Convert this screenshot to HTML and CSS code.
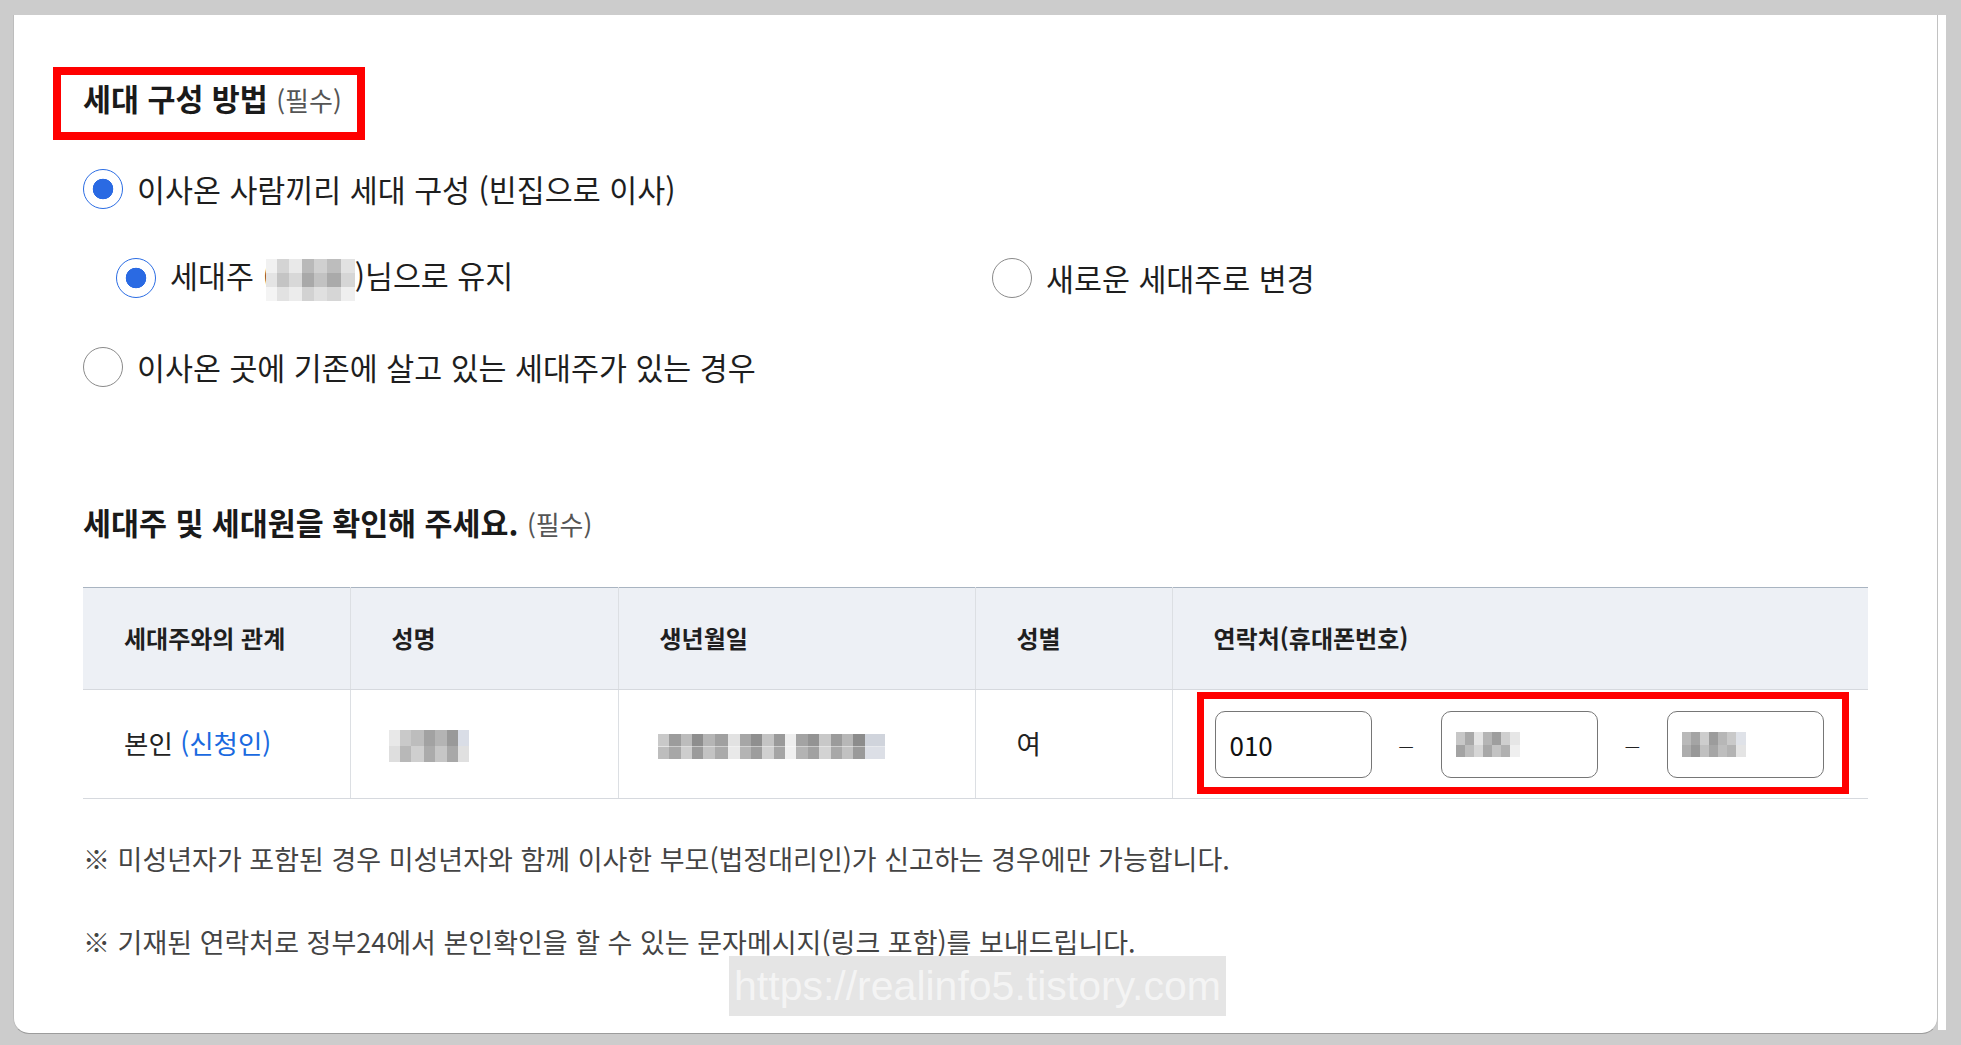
FILE: index.html
```html
<!DOCTYPE html>
<html lang="ko">
<head>
  <meta charset="UTF-8" />
  <meta name="viewport" content="width=device-width, initial-scale=1" />
  <title>세대 구성 방법</title>
  <link rel="stylesheet" href="styles.css">
</head>
<body>

  <div class="frame">
    <div class="card">
      <h2 class="title boxed">세대 구성 방법 <span class="req">(필수)</span></h2>

      <div class="options">
        <label class="opt">
          <input type="radio" name="mode" class="radio" checked>
          <span>이사온 사람끼리 세대 구성 (빈집으로 이사)</span>
        </label>
        <div class="sub">
          <label class="opt">
            <input type="radio" name="head" class="radio" checked>
            <span>세대주 (<span class="mosaic m-head"></span>)님으로 유지</span>
          </label>
          <label class="opt">
            <input type="radio" name="head" class="radio">
            <span>새로운 세대주로 변경</span>
          </label>
        </div>
        <label class="opt">
          <input type="radio" name="mode" class="radio">
          <span>이사온 곳에 기존에 살고 있는 세대주가 있는 경우</span>
        </label>
      </div>

      <h2 class="title section">세대주 및 세대원을 확인해 주세요. <span class="req">(필수)</span></h2>

      <table class="members">
        <colgroup>
          <col style="width: 267px">
          <col style="width: 268px">
          <col style="width: 357px">
          <col style="width: 197px">
          <col>
        </colgroup>
        <thead>
          <tr>
            <th>세대주와의 관계</th>
            <th>성명</th>
            <th>생년월일</th>
            <th>성별</th>
            <th>연락처(휴대폰번호)</th>
          </tr>
        </thead>
        <tbody>
          <tr>
            <td>본인 <span class="link">(신청인)</span></td>
            <td><span class="mosaic m-name"></span></td>
            <td><span class="mosaic m-birth"></span></td>
            <td>여</td>
            <td class="tel-cell">
              <div class="tel-group">
                <input type="text" class="tel" value="010">
                <span class="dash">—</span>
                <input type="text" class="tel masked">
                <span class="dash">—</span>
                <input type="text" class="tel masked alt">
              </div>
            </td>
          </tr>
        </tbody>
      </table>

      <p class="note first">※ 미성년자가 포함된 경우 미성년자와 함께 이사한 부모(법정대리인)가 신고하는 경우에만 가능합니다.</p>
      <p class="note">※ 기재된 연락처로 정부24에서 본인확인을 할 수 있는 문자메시지(링크 포함)를 보내드립니다.</p>

      <div class="watermark">https://realinfo5.tistory.com</div>
    </div>
    <div class="gutter"></div>
  </div>

</body>
</html>
```

FILE: styles.css
```css
html, body {
  height: 100%;
}
body {
  margin: 0;
  background: #cccccc;
  font-family: 'Noto Sans CJK KR', 'Noto Sans', sans-serif;
  color: #1c1c1c;
  overflow: hidden;
}
.frame {
  display: flex;
  align-items: flex-start;
  padding: 15px 15px 0 13px;
}
.card {
  position: relative;
  flex: 1;
  height: 1018px;
  background: #fff;
  border-left: 1px solid #bdbdbd;
  border-right: 1px solid #c2c2c2;
  border-bottom: 1px solid #9c9c9c;
  border-radius: 0 0 16px 16px;
  padding: 0 69px;
}
.gutter {
  width: 8px;
  height: 1015px;
  background: #fff;
}
.title {
  margin: 0;
  font-size: 30.4px;
  font-weight: 700;
  color: #1a1a1a;
}
.req {
  font-size: 26px;
  font-weight: 400;
  color: #555;
}
.boxed {
  width: fit-content;
  margin: 52px 0 0 -30px;
  border: 8px solid #ff0000;
  padding: 0 15px 9px 22px;
  line-height: 47px;
}
.options {
  display: flex;
  flex-direction: column;
  gap: 49px;
  margin-top: 29px;
}
.sub {
  display: grid;
  grid-template-columns: 1fr 1fr;
  margin-left: 33px;
}
.opt {
  display: flex;
  align-items: center;
  gap: 14px;
  height: 40px;
  font-size: 30.4px;
  line-height: 40px;
  color: #1e1e1e;
}
.radio {
  appearance: none;
  -webkit-appearance: none;
  flex: none;
  width: 40px;
  height: 40px;
  margin: 0;
  border: 1px solid #8a8a8a;
  border-radius: 50%;
  background: #fff;
}
.radio:checked {
  border-color: #2b6de4;
  background: radial-gradient(circle, #2a6ae3 0 10px, #fff 10.6px);
}
.section {
  margin-top: 115px;
  line-height: 40px;
}
.members {
  width: 100%;
  margin-top: 43px;
  border-collapse: collapse;
  table-layout: fixed;
  border-top: 1px solid #a9b4c1;
}
.members th {
  height: 98px;
  padding: 0 0 3px 41px;
  background: #edf0f5;
  text-align: left;
  font-size: 24px;
  font-weight: 700;
  color: #1f1f1f;
  border-bottom: 1px solid #d6d9de;
  border-left: 1px solid #dcdfe3;
}
.members td {
  height: 105px;
  padding: 0 0 3px 41px;
  font-size: 26.5px;
  color: #222;
  border-bottom: 1px solid #d6d9de;
  border-left: 1px solid #dcdfe3;
}
.members th:first-child,
.members td:first-child {
  border-left: none;
}
.link {
  color: #1a6ae0;
}
.members td.tel-cell {
  padding-left: 24px;
}
.tel-group {
  display: flex;
  align-items: center;
  gap: 27px;
  width: fit-content;
  border: 7px solid #ff0000;
  padding: 12px 18px 9px 11px;
}
.tel {
  box-sizing: border-box;
  width: 157px;
  height: 67px;
  padding: 0 14px;
  border: 1px solid #767676;
  border-radius: 10px;
  font-family: inherit;
  font-size: 26px;
  color: #111;
  background: #fff;
}
.dash {
  font-size: 17px;
  line-height: 1;
  color: #222;
}
.mosaic {
  display: inline-block;
  vertical-align: middle;
  filter: blur(0.7px);
}
.m-head {
  width: 89px;
  height: 42px;
  margin-left: -7px;
  background:
    linear-gradient(90deg, #f1f1f1 0 12%, #d4d4d4 12% 26%, #e9e9e9 26% 40%, #b9b9b9 40% 54%, #d0d0d0 54% 68%, #bdbdbd 68% 84%, #e2e2e2 84% 100%) top / 100% 34% no-repeat,
    linear-gradient(90deg, #e4e4e4 0 12%, #c4c4c4 12% 26%, #d8d8d8 26% 40%, #a9a9a9 40% 54%, #c2c2c2 54% 68%, #aaaaaa 68% 84%, #d6d6d6 84% 100%) center / 100% 34% no-repeat,
    linear-gradient(90deg, #f4f4f4 0 12%, #e2e2e2 12% 26%, #ececec 26% 40%, #d2d2d2 40% 54%, #e0e0e0 54% 68%, #d6d6d6 68% 84%, #efefef 84% 100%) bottom / 100% 34% no-repeat;
}
.m-name {
  width: 80px;
  height: 32px;
  margin-left: -3px;
  background:
    linear-gradient(90deg, #e8e8e8 0 14%, #c9c9c9 14% 28%, #bdbdbd 28% 44%, #a2a2a2 44% 58%, #b4b4b4 58% 72%, #999 72% 86%, #d9dde6 86% 100%) top / 100% 50% no-repeat,
    linear-gradient(90deg, #dedede 0 14%, #b8b8b8 14% 28%, #cfcfcf 28% 44%, #ababab 44% 58%, #c6c6c6 58% 72%, #a8a8a8 72% 86%, #e0e0e0 86% 100%) bottom / 100% 50% no-repeat;
}
.m-birth {
  width: 227px;
  height: 25px;
  margin-left: -2px;
  background:
    linear-gradient(90deg, #c9c9c9 0 5%, #9c9c9c 5% 10%, #bcbcbc 10% 15%, #8e8e8e 15% 20%, #b5b5b5 20% 25%, #a0a0a0 25% 31%, #e2e2e2 31% 36%, #a6a6a6 36% 41%, #8f8f8f 41% 46%, #c4c4c4 46% 51%, #9a9a9a 51% 56%, #eeeeee 56% 61%, #a3a3a3 61% 66%, #939393 66% 71%, #c8c8c8 71% 76%, #9b9b9b 76% 81%, #b7b7b7 81% 86%, #8c8c8c 86% 91%, #d0d4dc 91% 100%) top / 100% 50% no-repeat,
    linear-gradient(90deg, #bdbdbd 0 5%, #a7a7a7 5% 10%, #cdcdcd 10% 15%, #9b9b9b 15% 20%, #c3c3c3 20% 25%, #aaaaaa 25% 31%, #e9e9e9 31% 36%, #b4b4b4 36% 41%, #9d9d9d 41% 46%, #d0d0d0 46% 51%, #a5a5a5 51% 56%, #f0f0f0 56% 61%, #b3b3b3 61% 66%, #a1a1a1 66% 71%, #d3d3d3 71% 76%, #a8a8a8 76% 81%, #c1c1c1 81% 86%, #9a9a9a 86% 91%, #dcdfe6 91% 100%) bottom / 100% 50% no-repeat;
}
.tel.masked {
  background:
    linear-gradient(90deg, #c7c7c7 0 14%, #a9a9a9 14% 28%, #e4e4e4 28% 42%, #b5b5b5 42% 56%, #9e9e9e 56% 70%, #cfcfcf 70% 84%, #e6e6e6 84% 100%) 14px calc(50% - 6px) / 64px 13px no-repeat,
    linear-gradient(90deg, #a3a3a3 0 14%, #bdbdbd 14% 28%, #d6d6d6 28% 42%, #a8a8a8 42% 56%, #c3c3c3 56% 70%, #b1b1b1 70% 84%, #efefef 84% 100%) 14px calc(50% + 6px) / 64px 13px no-repeat,
    #fff;
}
.tel.masked.alt {
  background:
    linear-gradient(90deg, #b9b9b9 0 14%, #a4a4a4 14% 28%, #cdcdcd 28% 42%, #9c9c9c 42% 56%, #b7b7b7 56% 70%, #c9c9c9 70% 84%, #dfe2e8 84% 100%) 14px calc(50% - 6px) / 64px 13px no-repeat,
    linear-gradient(90deg, #adadad 0 14%, #989898 14% 28%, #c0c0c0 28% 42%, #a6a6a6 42% 56%, #bebebe 56% 70%, #b3b3b3 70% 84%, #e4e4e4 84% 100%) 14px calc(50% + 6px) / 64px 13px no-repeat,
    #fff;
}
.note {
  margin: 47px 0 0;
  font-size: 27px;
  line-height: 36px;
  color: #444;
}
.note.first {
  margin-top: 42px;
}
.watermark {
  position: absolute;
  left: 715px;
  top: 941px;
  width: 497px;
  height: 60px;
  background: rgba(222, 222, 222, 0.8);
  color: rgba(255, 255, 255, 0.6);
  font-family: 'Liberation Sans', Arial, sans-serif;
  font-size: 41px;
  line-height: 60px;
  text-align: center;
  white-space: nowrap;
}
```
